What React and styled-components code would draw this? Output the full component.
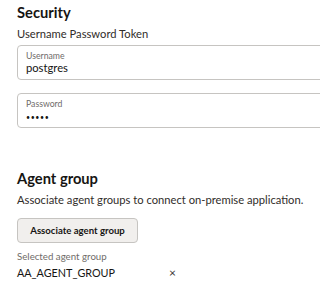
import React from 'react'
import styled, {createGlobalStyle} from 'styled-components'

const Global = createGlobalStyle`
  body {
    margin: 0;
    background: #fff;
    font-family: Lato, "Liberation Sans", sans-serif;
    color: #161513;
  }
`

function TextField ({label, value, secret}) {
  return (
    <Field>
      <FieldLabel>{label}</FieldLabel>
      <FieldValue $secret={secret}>{secret ? '•'.repeat(value.length) : value}</FieldValue>
    </Field>
  )
}

export default function App () {
  return (
    <Page>
      <Global />
      <Section>
        <Heading>Security</Heading>
        <Sub>Username Password Token</Sub>
        <Fields>
          <TextField label='Username' value='postgres' />
          <TextField label='Password' value='admin' secret />
        </Fields>
      </Section>
      <Section>
        <Heading>Agent group</Heading>
        <Sub>Associate agent groups to connect on-premise application.</Sub>
        <Button>Associate agent group</Button>
        <SmallLabel>Selected agent group</SmallLabel>
        <Selected>
          <span>AA_AGENT_GROUP</span>
          <Remove>×</Remove>
        </Selected>
      </Section>
    </Page>
  )
}

const Page = styled.div`
  width: 320px;
  height: 295px;
  overflow: hidden;
  padding: 3px 0 0 17px;
  box-sizing: border-box;
  display: flex;
  flex-direction: column;
  gap: 41px;
  white-space: nowrap;
`
const Section = styled.div`
  display: flex;
  flex-direction: column;
  align-items: flex-start;
`
const Heading = styled.h2`
  margin: 0;
  font-size: 14.7px;
  line-height: 18px;
  font-weight: 700;
  color: #161513;
`
const Sub = styled.div`
  margin-top: 6px;
  font-size: 11.2px;
  line-height: 14px;
  color: #312d2a;
`
const Fields = styled.div`
  margin-top: 4px;
  width: 330px;
  display: flex;
  flex-direction: column;
  gap: 13px;
`
const Field = styled.div`
  height: 35px;
  box-sizing: border-box;
  border: 1px solid #c6c4c1;
  border-radius: 4px;
  padding: 5px 8px 0;
  display: flex;
  flex-direction: column;
`
const FieldLabel = styled.div`
  font-size: 8.7px;
  line-height: 10px;
  color: #6f6c69;
`
const FieldValue = styled.div`
  font-size: ${p => (p.$secret ? '7px' : '11.2px')};
  letter-spacing: ${p => (p.$secret ? '0.6px' : 'normal')};
  line-height: 14px;
  padding-top: ${p => (p.$secret ? '1px' : '0')};
  color: #161513;
`
const Button = styled.button`
  margin-top: 11px;
  width: 121px;
  height: 25px;
  border: 1px solid #c6c4c1;
  border-radius: 4px;
  background: #f1efed;
  font-family: inherit;
  font-size: 9.6px;
  font-weight: 700;
  color: #161513;
  padding: 0;
`
const SmallLabel = styled.div`
  margin-top: 7px;
  font-size: 9.7px;
  line-height: 12px;
  color: #6f6c69;
`
const Selected = styled.div`
  margin-top: 4px;
  display: flex;
  align-items: center;
  gap: 54px;
  font-size: 10.8px;
  line-height: 14px;
  color: #161513;
`
const Remove = styled.span`
  font-size: 12px;
  color: #3a3631;
`
